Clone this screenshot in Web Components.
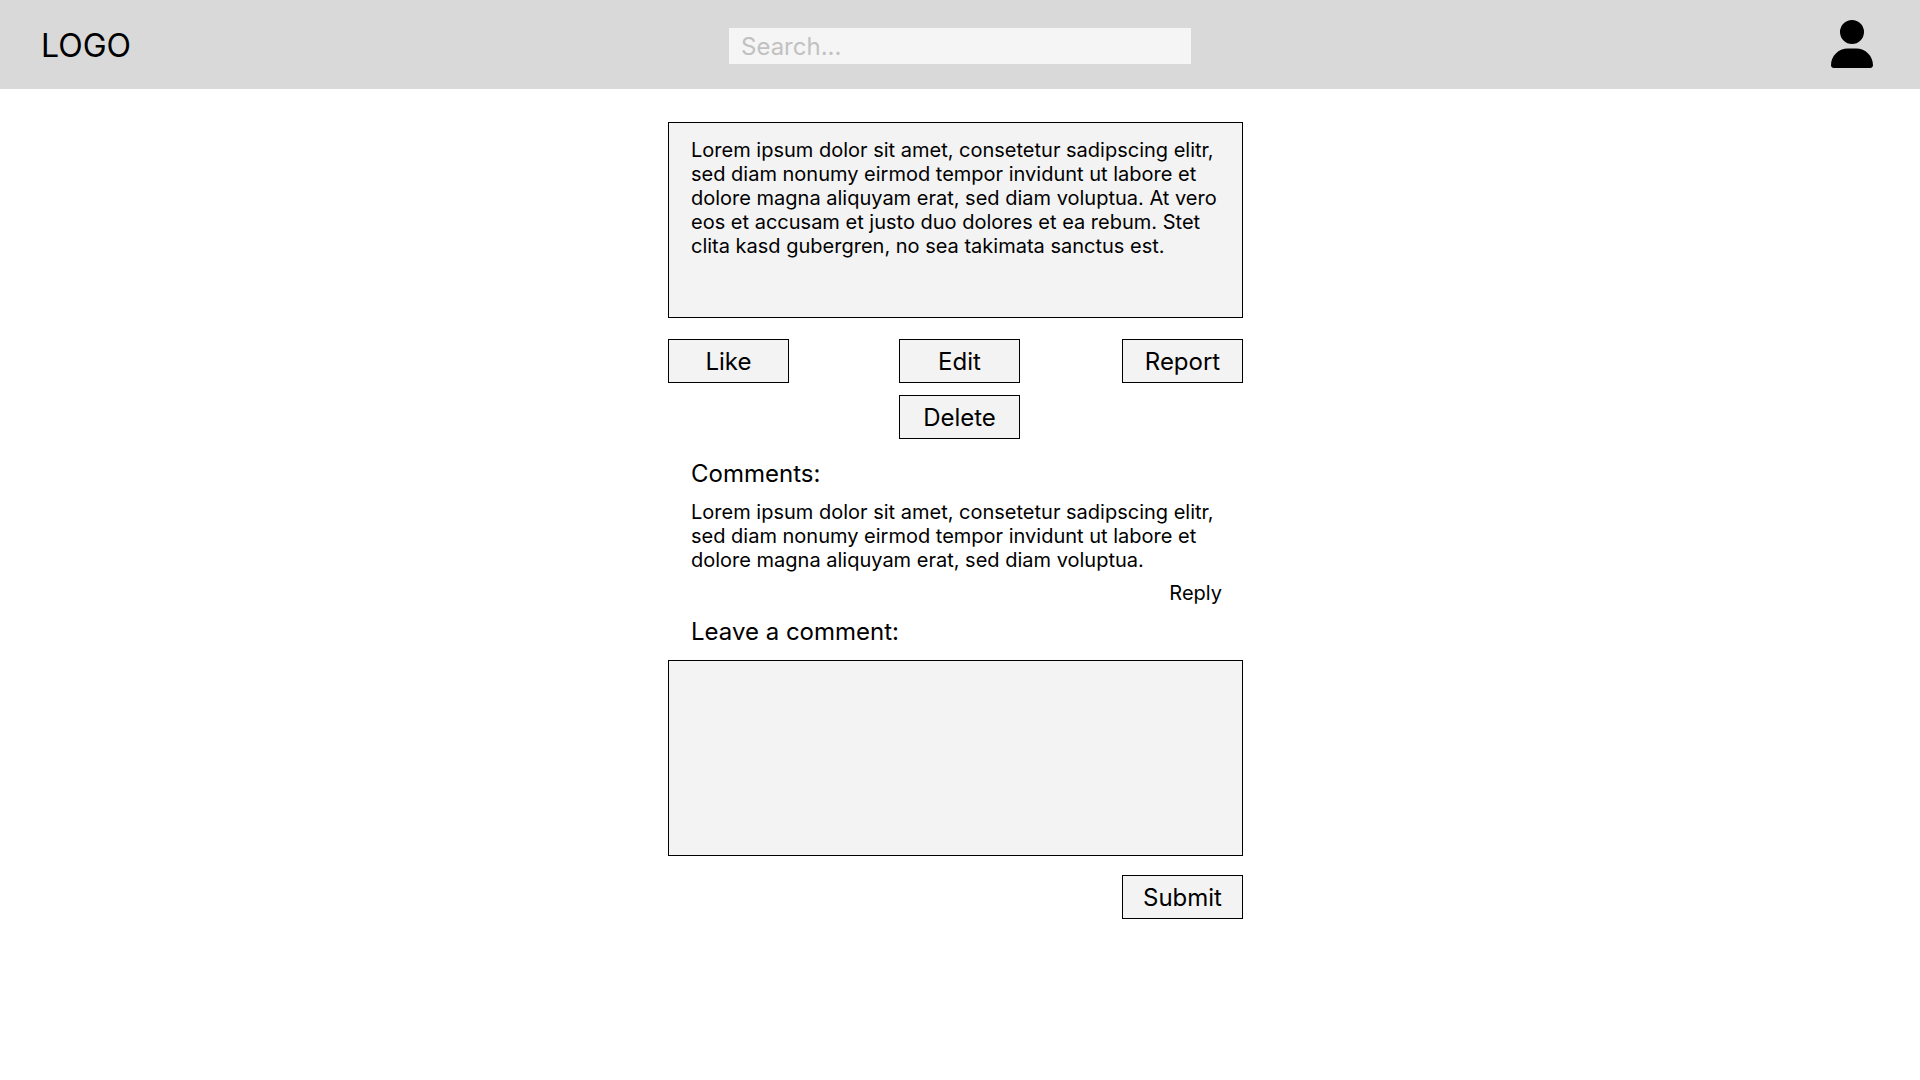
<!DOCTYPE html>
<html lang="en">
<head>
<meta charset="utf-8">
<meta name="viewport" content="width=device-width, initial-scale=1">
<title>Post</title>
<style>
  :root { --surface: #f3f3f3; --bar: #d9d9d9; --hint: #c1c1c1; --line: #000; }
  body { margin: 0; background: #fff; color: #000; font: 20px/24px Inter, "Liberation Sans", sans-serif; }
</style>
</head>
<body>
<site-header></site-header>
<post-page>
  <post-card>Lorem ipsum dolor sit amet, consetetur sadipscing elitr, sed diam nonumy eirmod tempor invidunt ut labore et dolore magna aliquyam erat, sed diam voluptua. At vero eos et accusam et justo duo dolores et ea rebum. Stet clita kasd gubergren, no sea takimata sanctus est.</post-card>
  <post-actions></post-actions>
  <comment-list>
    <comment-item>Lorem ipsum dolor sit amet, consetetur sadipscing elitr, sed diam nonumy eirmod tempor invidunt ut labore et dolore magna aliquyam erat, sed diam voluptua.</comment-item>
  </comment-list>
  <comment-form></comment-form>
</post-page>

<script>
const define = (name, html) => {
  const template = document.createElement('template');
  template.innerHTML = html;
  customElements.define(name, class extends HTMLElement {
    constructor() {
      super();
      this.attachShadow({ mode: 'open' }).append(template.content.cloneNode(true));
    }
  });
};

define('box-button', `
  <style>
    :host { display: block; width: 121px; }
    button { display: block; box-sizing: border-box; width: 100%; height: 44px; padding: 0; border: 1px solid var(--line); border-radius: 0; background: var(--surface); color: inherit; font: inherit; font-size: 24px; line-height: 29px; text-align: center; cursor: pointer; }
  </style>
  <button type="button"><slot></slot></button>`);

define('user-icon', `
  <style>
    :host { display: block; }
    svg { display: block; width: 42px; height: 48px; }
  </style>
  <svg viewBox="0 0 448 512" aria-hidden="true"><path d="M224 256A128 128 0 1 0 224 0a128 128 0 1 0 0 256zm-45.7 48C79.8 304 0 383.8 0 482.3C0 498.7 13.3 512 29.7 512H418.3c16.4 0 29.7-13.3 29.7-29.7C448 383.8 368.2 304 269.7 304H178.3z"/></svg>`);

define('search-box', `
  <style>
    :host { display: block; }
    input { display: block; box-sizing: border-box; width: 100%; height: 36px; margin: 0; padding: 2px 12px 0; border: 0; border-radius: 0; background: #f5f5f5; color: inherit; font: inherit; font-size: 24px; line-height: 29px; }
    input::placeholder { color: var(--hint); opacity: 1; }
  </style>
  <input type="text" placeholder="Search..." aria-label="Search">`);

define('site-header', `
  <style>
    :host { display: block; background: var(--bar); }
    header { display: grid; grid-template-columns: 1fr minmax(0, 462px) 1fr; align-items: center; padding: 20px 0 21px; }
    a { justify-self: start; margin-left: 41px; padding-top: 2px; color: inherit; font-size: 32px; line-height: 39px; text-decoration: none; }
    search-box { padding-top: 3px; }
    button { justify-self: end; margin: 0 47px 0 0; padding: 0; border: 0; background: none; color: inherit; cursor: pointer; }
  </style>
  <header>
    <a href="#">LOGO</a>
    <search-box></search-box>
    <button type="button" aria-label="Account"><user-icon></user-icon></button>
  </header>`);

define('post-page', `
  <style>
    :host { display: block; padding: 33px 9px 33px 0; }
    main { display: flex; flex-direction: column; max-width: 575px; margin: 0 auto; }
  </style>
  <main><slot></slot></main>`);

define('post-card', `
  <style>
    :host { display: block; box-sizing: border-box; min-height: 196px; padding: 15px 20px 15px 22px; border: 1px solid var(--line); background: var(--surface); }
    p { margin: 0; }
  </style>
  <article><p><slot></slot></p></article>`);

define('post-actions', `
  <style>
    :host { display: flex; justify-content: space-between; align-items: flex-start; margin-top: 21px; }
    .author { display: flex; flex-direction: column; gap: 12px; margin-left: 8px; }
  </style>
  <box-button>Like</box-button>
  <div class="author">
    <box-button>Edit</box-button>
    <box-button>Delete</box-button>
  </div>
  <box-button>Report</box-button>`);

define('comment-list', `
  <style>
    :host { display: block; margin-top: 20px; padding: 0 21px 0 23px; }
    h2 { margin: 0 0 12px; font-size: 24px; line-height: 29px; font-weight: 400; }
  </style>
  <section><h2>Comments:</h2><slot></slot></section>`);

define('comment-item', `
  <style>
    :host { display: flex; flex-direction: column; gap: 9px; }
    p { margin: 0; }
    button { align-self: flex-end; padding: 0; border: 0; background: none; color: inherit; font: inherit; cursor: pointer; }
  </style>
  <p><slot></slot></p>
  <button type="button">Reply</button>`);

define('comment-form', `
  <style>
    :host { display: block; margin-top: 12px; }
    form { display: flex; flex-direction: column; }
    label { margin-bottom: 14px; padding: 0 21px 0 23px; font-size: 24px; line-height: 29px; }
    textarea { display: block; box-sizing: border-box; width: 100%; height: 196px; margin: 0 0 19px; padding: 15px 20px 15px 22px; border: 1px solid var(--line); border-radius: 0; background: var(--surface); color: inherit; font: inherit; resize: none; }
    box-button { align-self: flex-end; }
  </style>
  <form>
    <label for="comment">Leave a comment:</label>
    <textarea id="comment"></textarea>
    <box-button>Submit</box-button>
  </form>`);
</script>
</body>
</html>
